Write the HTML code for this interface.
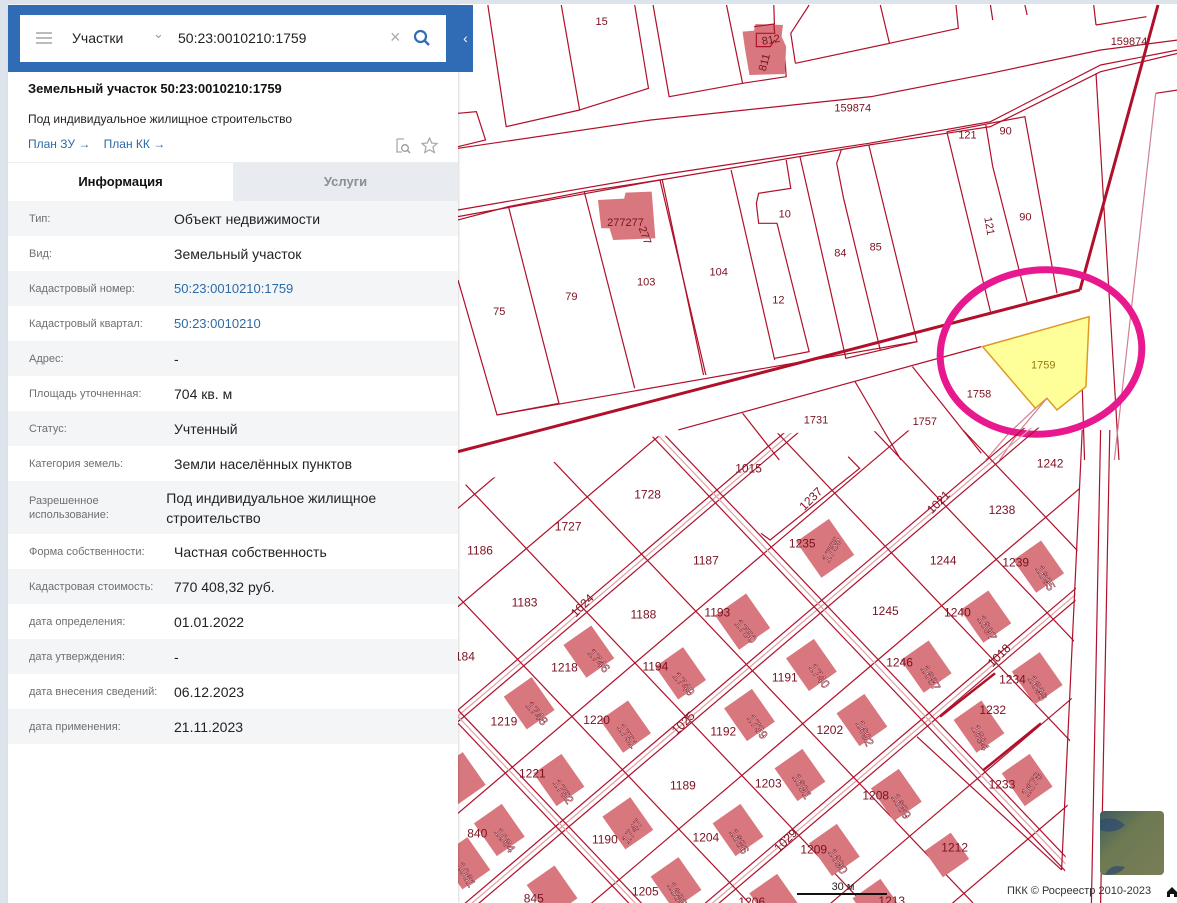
<!DOCTYPE html>
<html><head><meta charset="utf-8"><style>
*{margin:0;padding:0;box-sizing:border-box}
body{width:1177px;height:903px;overflow:hidden;background:#fff;font-family:"Liberation Sans","DejaVu Sans",sans-serif;position:relative}
#map{position:absolute;left:0;top:0}
#map line,#map polyline,#map polygon,#map ellipse{vector-effect:non-scaling-stroke}
.panel{position:absolute;left:8px;top:5px;width:450px;height:898px;background:#fff;box-shadow:1px 0 2px rgba(0,0,0,.15);overflow:hidden}
.hdr{height:67px;background:#2f6cb5;padding:10px 12px}
.sb{background:#fff;height:47px;position:relative;font-size:14px;color:#222}
.tab{position:absolute;left:458px;top:5px;width:15px;height:67px;background:#2f6cb5;color:#fff;font-size:14px;line-height:67px;text-align:center}
.row{height:35px;display:flex;align-items:center;padding-left:21px}
.row.g{background:#f4f5f7}
.l{width:145px;font-size:11px;color:#6f6f6f;line-height:14px}
.v{font-size:14px;color:#222;line-height:20px}
.v.a{color:#2d6aa6;font-size:13px}
</style></head><body>
<svg id="map" width="1177" height="903">
<rect x="0" y="0" width="1177" height="4" fill="#dde3ea"/>
<defs><clipPath id="gc"><polygon points="0,170 430,18 1360,-10 1320,1419 0,1419"/></clipPath></defs>
<g transform="translate(458,0) scale(0.459,0.3333)" fill="none" stroke="#b0102a" stroke-width="1.2">
<polyline points="0,445 420,360 900,290 1160,220 1400,150 1568,120"/>
<polyline points="0,650 440,540 895,435 1160,380 1400,215 1568,160"/>
<polyline points="0,630 440,525 895,430 1160,365 1400,195 1568,150"/>
<polyline points="65,15 105,380 265,330 225,15"/>
<polyline points="265,330 415,265 385,15"/>
<polyline points="425,15 460,290 620,250 585,15"/>
<polyline points="620,250 715,230 710,130 690,100 688,15"/>
<polyline points="735,190 940,130 920,15"/>
<polyline points="735,190 725,100 765,15"/>
<polyline points="940,130 1090,85 1085,15"/>
<polyline points="1165,60 1160,15"/><polyline points="1240,45 1235,15"/>
<polyline points="1390,75 1385,15"/><polyline points="1390,75 1500,50"/>
<polyline points="0,340 40,335 60,420 0,440"/>
<polyline points="0,660 110,620 220,1210 85,1245 0,840"/>
<polyline points="110,620 275,575 385,1165"/>
<polyline points="275,575 440,540 540,1125"/>
<polyline points="445,540 535,1125"/>
<polyline points="85,1245 1000,1025"/>
<polyline points="595,510 690,1080"/>
<polyline points="715,480 725,565 655,580 650,610 655,670 695,670 765,1055 690,1075"/>
<polyline points="745,470 845,1075 1000,1025 895,435"/>
<polyline points="835,450 825,490 840,595 920,1050"/>
<polyline points="1065,395 1160,935"/>
<polyline points="1065,395 1235,350 1305,880"/>
<polyline points="1150,375 1165,500 1240,905"/>
<polyline points="1390,220 1440,1380"/>
<polyline points="1520,280 1568,270"/>
<polyline points="1520,280 1430,1380" stroke="#d08090"/>
<polyline points="480,1290 1060,1070 1140,1040"/>
<polyline points="620,1240 700,1380"/><polyline points="865,1145 965,1380"/>
<polyline points="990,1100 1140,1360"/>
<polyline points="1360,1160 1365,1380"/>
<polygon points="305,600 362,596 365,578 422,575 430,715 338,720 330,685 312,685" fill="#d8787e" stroke="none"/>
<polygon points="620,95 645,92 648,72 708,75 705,110 715,140 712,222 635,225 625,145" fill="#d8787e" stroke="none"/>
<polyline points="645,80 688,72 690,100 650,100 650,140 680,140 690,120"/>
<polygon points="1143,1040 1375,950 1368,1160 1305,1230 1283,1195 1258,1225" fill="#ffff99" stroke="#e09a20" stroke-width="1.5"/>
<polyline points="1258,1225 1200,1300 1150,1380" stroke="#d08090"/><polyline points="1283,1195 1225,1290 1180,1380" stroke="#d08090"/>
<line x1="0" y1="1355" x2="1355" y2="870" stroke-width="3"/>
<line x1="1355" y1="870" x2="1525" y2="15" stroke-width="3"/>
<g stroke="none" fill="#7a1020" font-size="11" text-anchor="middle">
<text transform="translate(313,75) scale(2.18,3)">15</text>
<text transform="translate(683,130) scale(2.18,3) rotate(-10)">812</text>
<text transform="translate(675,190) scale(2.18,3) rotate(-75)">811</text>
<text transform="translate(860,335) scale(2.18,3)">159874</text>
<text transform="translate(1462,135) scale(2.18,3)">159874</text>
<text transform="translate(1110,415) scale(2.18,3)">121</text>
<text transform="translate(1193,403) scale(2.18,3)">90</text>
<text transform="translate(365,678) scale(2.18,3)">277277</text>
<text transform="translate(400,710) scale(2.18,3) rotate(70)">277</text>
<text transform="translate(712,652) scale(2.18,3)">10</text>
<text transform="translate(410,857) scale(2.18,3)">103</text>
<text transform="translate(247,900) scale(2.18,3)">79</text>
<text transform="translate(90,945) scale(2.18,3)">75</text>
<text transform="translate(568,827) scale(2.18,3)">104</text>
<text transform="translate(698,910) scale(2.18,3)">12</text>
<text transform="translate(833,770) scale(2.18,3)">84</text>
<text transform="translate(910,752) scale(2.18,3)">85</text>
<text transform="translate(1150,680) scale(2.18,3) rotate(80)">121</text>
<text transform="translate(1236,662) scale(2.18,3)">90</text>
<text transform="translate(1275,1105) scale(2.18,3)" fill="#9a7a10">1759</text>
<text transform="translate(1135,1192) scale(2.18,3)">1758</text>
<text transform="translate(780,1270) scale(2.18,3)">1731</text>
<text transform="translate(1017,1275) scale(2.18,3)">1757</text>
</g>
</g>
<ellipse cx="1041" cy="352" rx="101" ry="82" fill="none" stroke="#e8198e" stroke-width="7" transform="rotate(-6 1041 352)"/>
<g transform="translate(458,430) scale(0.459,0.3333)">
<g clip-path="url(#gc)" fill="none" stroke="#b0102a" stroke-width="1.2">
<line x1="0" y1="235" x2="1400" y2="-1403"/>
<line x1="0" y1="530" x2="1400" y2="-1108"/>
<line x1="0" y1="840" x2="1400" y2="-798"/>
<line x1="0" y1="875" x2="1400" y2="-763"/>
<line x1="0" y1="858" x2="1400" y2="-780" stroke="#e0a0a8"/>
<line x1="0" y1="1150" x2="1400" y2="-488"/>
<line x1="0" y1="1438" x2="1400" y2="-200"/>
<line x1="0" y1="1473" x2="1400" y2="-165"/>
<line x1="0" y1="1455" x2="1400" y2="-183" stroke="#e0a0a8"/>
<line x1="0" y1="1760" x2="1400" y2="122"/>
<line x1="0" y1="2050" x2="1400" y2="412"/>
<line x1="0" y1="2085" x2="1400" y2="447"/>
<line x1="0" y1="2068" x2="1400" y2="430" stroke="#e0a0a8"/>
<line x1="0" y1="2370" x2="1400" y2="732"/>
<line x1="0" y1="2680" x2="1400" y2="1042"/>
<line x1="0" y1="840" x2="400" y2="1420"/>
<line x1="0" y1="880" x2="380" y2="1431"/>
<line x1="0" y1="860" x2="390" y2="1425" stroke="#e0a0a8"/>
<line x1="0" y1="500" x2="634" y2="1419"/>
<line x1="-100" y1="-5" x2="900" y2="1445"/>
<line x1="143" y1="0" x2="1122" y2="1419"/>
<line x1="410" y1="0" x2="1390" y2="1420"/>
<line x1="440" y1="0" x2="1420" y2="1420"/>
<line x1="425" y1="0" x2="1405" y2="1420" stroke="#e0a0a8"/>
<line x1="690" y1="0" x2="1670" y2="1420"/>
<line x1="905" y1="0" x2="1885" y2="1420"/>
<line x1="1100" y1="0" x2="1360" y2="377"/>
<polyline points="1000,920 1315,1320"/>
<polyline points="850,80 875,115 680,330 660,310"/>
</g>
<g fill="none" stroke="#b0102a" stroke-width="1.2">
<polyline points="1360,0 1315,1320"/>
<polyline points="1400,0 1380,1419"/>
<polyline points="1420,0 1400,1419"/>
<polyline points="1050,860 1170,730" stroke-width="2.5"/>
<polyline points="1145,1020 1270,880" stroke-width="2.5"/>
</g>
<g fill="#d8787e">
<rect x="-20" y="-22" width="40" height="44" transform="translate(800,355) scale(2.18,3) rotate(-35)"/>
<rect x="-17" y="-20" width="34" height="40" transform="translate(1265,410) scale(2.18,3) rotate(-35)"/>
<rect x="-19" y="-21" width="38" height="42" transform="translate(620,575) scale(2.18,3) rotate(-35)"/>
<rect x="-17" y="-20" width="34" height="40" transform="translate(1150,560) scale(2.18,3) rotate(-35)"/>
<rect x="-17" y="-20" width="34" height="40" transform="translate(285,665) scale(2.18,3) rotate(-35)"/>
<rect x="-17" y="-20" width="34" height="40" transform="translate(485,730) scale(2.18,3) rotate(-35)"/>
<rect x="-17" y="-20" width="34" height="40" transform="translate(770,705) scale(2.18,3) rotate(-35)"/>
<rect x="-17" y="-20" width="34" height="40" transform="translate(1020,710) scale(2.18,3) rotate(-35)"/>
<rect x="-17" y="-20" width="34" height="40" transform="translate(155,820) scale(2.18,3) rotate(-35)"/>
<rect x="-17" y="-20" width="34" height="40" transform="translate(365,890) scale(2.18,3) rotate(-35)"/>
<rect x="-17" y="-20" width="34" height="40" transform="translate(635,855) scale(2.18,3) rotate(-35)"/>
<rect x="-17" y="-20" width="34" height="40" transform="translate(880,870) scale(2.18,3) rotate(-35)"/>
<rect x="-17" y="-20" width="34" height="40" transform="translate(1262,745) scale(2.18,3) rotate(-35)"/>
<rect x="-17" y="-20" width="34" height="40" transform="translate(1135,890) scale(2.18,3) rotate(-35)"/>
<rect x="-17" y="-20" width="34" height="40" transform="translate(220,1050) scale(2.18,3) rotate(-35)"/>
<rect x="-17" y="-20" width="34" height="40" transform="translate(745,1035) scale(2.18,3) rotate(-35)"/>
<rect x="-17" y="-20" width="34" height="40" transform="translate(955,1095) scale(2.18,3) rotate(-35)"/>
<rect x="-17" y="-20" width="34" height="40" transform="translate(1240,1050) scale(2.18,3) rotate(-35)"/>
<rect x="-17" y="-20" width="34" height="40" transform="translate(90,1200) scale(2.18,3) rotate(-35)"/>
<rect x="-17" y="-20" width="34" height="40" transform="translate(370,1180) scale(2.18,3) rotate(-35)"/>
<rect x="-17" y="-20" width="34" height="40" transform="translate(610,1200) scale(2.18,3) rotate(-35)"/>
<rect x="-17" y="-20" width="34" height="40" transform="translate(820,1260) scale(2.18,3) rotate(-35)"/>
<rect x="-16" y="-16" width="32" height="32" transform="translate(1065,1275) scale(2.18,3) rotate(-35)"/>
<rect x="-17" y="-20" width="34" height="40" transform="translate(475,1360) scale(2.18,3) rotate(-35)"/>
<rect x="-17" y="-20" width="34" height="40" transform="translate(205,1385) scale(2.18,3) rotate(-35)"/>
<rect x="-17" y="-20" width="34" height="40" transform="translate(5,1045) scale(2.18,3) rotate(-35)"/>
<rect x="-17" y="-20" width="34" height="40" transform="translate(15,1300) scale(2.18,3) rotate(-35)"/>
<rect x="-17" y="-20" width="34" height="40" transform="translate(690,1410) scale(2.18,3) rotate(-35)"/>
<rect x="-17" y="-20" width="34" height="40" transform="translate(915,1425) scale(2.18,3) rotate(-35)"/>
</g>
<g font-size="12" fill="#7a1020" text-anchor="middle">
<text transform="translate(1290,113) scale(2.18,3)">1242</text>
<text transform="translate(633,128) scale(2.18,3)">1015</text>
<text transform="translate(413,205) scale(2.18,3)">1728</text>
<text transform="translate(1185,252) scale(2.18,3)">1238</text>
<text transform="translate(240,302) scale(2.18,3)">1727</text>
<text transform="translate(48,373) scale(2.18,3)">1186</text>
<text transform="translate(540,403) scale(2.18,3)">1187</text>
<text transform="translate(1057,403) scale(2.18,3)">1244</text>
<text transform="translate(750,353) scale(2.18,3)">1235</text>
<text transform="translate(1215,410) scale(2.18,3)">1239</text>
<text transform="translate(145,530) scale(2.18,3)">1183</text>
<text transform="translate(404,565) scale(2.18,3)">1188</text>
<text transform="translate(565,560) scale(2.18,3)">1193</text>
<text transform="translate(931,555) scale(2.18,3)">1245</text>
<text transform="translate(1088,560) scale(2.18,3)">1240</text>
<text transform="translate(15,692) scale(2.18,3)">184</text>
<text transform="translate(232,725) scale(2.18,3)">1218</text>
<text transform="translate(430,722) scale(2.18,3)">1194</text>
<text transform="translate(712,755) scale(2.18,3)">1191</text>
<text transform="translate(962,710) scale(2.18,3)">1246</text>
<text transform="translate(1208,760) scale(2.18,3)">1234</text>
<text transform="translate(1165,852) scale(2.18,3)">1232</text>
<text transform="translate(100,887) scale(2.18,3)">1219</text>
<text transform="translate(302,882) scale(2.18,3)">1220</text>
<text transform="translate(578,917) scale(2.18,3)">1192</text>
<text transform="translate(810,912) scale(2.18,3)">1202</text>
<text transform="translate(162,1043) scale(2.18,3)">1221</text>
<text transform="translate(490,1078) scale(2.18,3)">1189</text>
<text transform="translate(676,1073) scale(2.18,3)">1203</text>
<text transform="translate(1185,1075) scale(2.18,3)">1233</text>
<text transform="translate(910,1108) scale(2.18,3)">1208</text>
<text transform="translate(42,1222) scale(2.18,3)">840</text>
<text transform="translate(320,1240) scale(2.18,3)">1190</text>
<text transform="translate(540,1235) scale(2.18,3)">1204</text>
<text transform="translate(775,1270) scale(2.18,3)">1209</text>
<text transform="translate(1082,1265) scale(2.18,3)">1212</text>
<text transform="translate(408,1397) scale(2.18,3)">1205</text>
<text transform="translate(165,1418) scale(2.18,3)">845</text>
<text transform="translate(640,1428) scale(2.18,3)">1206</text>
<text transform="translate(945,1425) scale(2.18,3)">1213</text>
<text transform="translate(775,215) scale(2.18,3) rotate(-45)">1237</text>
<text transform="translate(1053,225) scale(2.18,3) rotate(-45)">1021</text>
<text transform="translate(277,535) scale(2.18,3) rotate(-45)">1024</text>
<text transform="translate(1185,685) scale(2.18,3) rotate(-45)">1018</text>
<text transform="translate(497,888) scale(2.18,3) rotate(-45)">1025</text>
<text transform="translate(720,1240) scale(2.18,3) rotate(-45)">1029</text>
<g fill="#fff" stroke="#7a1020" stroke-width="0.5">
<text transform="translate(822,365) scale(2.18,3) rotate(-60)">1755</text>
<text transform="translate(1272,450) scale(2.18,3) rotate(60)">1695</text>
<text transform="translate(620,612) scale(2.18,3) rotate(50)">1750</text>
<text transform="translate(1145,600) scale(2.18,3) rotate(60)">1697</text>
<text transform="translate(300,700) scale(2.18,3) rotate(50)">1746</text>
<text transform="translate(485,770) scale(2.18,3) rotate(50)">1749</text>
<text transform="translate(780,745) scale(2.18,3) rotate(55)">1740</text>
<text transform="translate(1022,750) scale(2.18,3) rotate(60)">1687</text>
<text transform="translate(165,858) scale(2.18,3) rotate(50)">1748</text>
<text transform="translate(362,925) scale(2.18,3) rotate(55)">1751</text>
<text transform="translate(645,897) scale(2.18,3) rotate(55)">1739</text>
<text transform="translate(878,915) scale(2.18,3) rotate(65)">1692</text>
<text transform="translate(1255,780) scale(2.18,3) rotate(60)">1698</text>
<text transform="translate(1130,928) scale(2.18,3) rotate(65)">1694</text>
<text transform="translate(222,1092) scale(2.18,3) rotate(55)">1752</text>
<text transform="translate(742,1075) scale(2.18,3) rotate(60)">1691</text>
<text transform="translate(958,1135) scale(2.18,3) rotate(60)">1689</text>
<text transform="translate(1258,1070) scale(2.18,3) rotate(-55)">1678</text>
<text transform="translate(95,1238) scale(2.18,3) rotate(55)">1064</text>
<text transform="translate(387,1210) scale(2.18,3) rotate(-55)">1747</text>
<text transform="translate(605,1240) scale(2.18,3) rotate(60)">1686</text>
<text transform="translate(820,1300) scale(2.18,3) rotate(60)">1690</text>
<text transform="translate(470,1400) scale(2.18,3) rotate(60)">1685</text>
<text transform="translate(10,1340) scale(2.18,3) rotate(60)">1061</text>
</g></g>
</g>
<line x1="797" y1="894" x2="887" y2="894" stroke="#111" stroke-width="2"/>
<text x="843" y="890" font-size="11" text-anchor="middle" fill="#222">30 м</text>
<text x="1007" y="894" font-size="11" fill="#333">ПКК © Росреестр 2010-2023</text>
<path d="M1167,897 v-5 l5,-5 l5,5 v5 h-3 v-3 h-4 v3z" fill="#111"/>
<defs><linearGradient id="sat" x1="0" y1="0" x2="1" y2="1"><stop offset="0" stop-color="#3e5a60"/><stop offset="0.4" stop-color="#6c7a52"/><stop offset="1" stop-color="#7a7c58"/></linearGradient></defs>
<rect x="1100" y="811" width="64" height="64" rx="4" fill="url(#sat)"/>
<path d="M1100,820 q15,-5 25,5 q-10,10 -25,5z" fill="#2c4a70" opacity="0.7"/>
<path d="M1105,875 q5,-12 20,-8 q-5,8 -20,8z" fill="#2c4a70" opacity="0.7"/>
</svg>
<div style="position:absolute;left:0;top:0;width:8px;height:903px;background:#dde3ea"></div>
<div class="panel">
 <div class="hdr"><div class="sb">
  <div style="position:absolute;left:16px;top:17px;width:16px;height:2px;background:#bbb;box-shadow:0 5px 0 #bbb,0 10px 0 #bbb"></div>
  <div style="position:absolute;left:52px;top:15px">Участки</div>
  <div style="position:absolute;left:133px;top:11px;color:#999;font-size:13px">&#8964;</div>
  <div style="position:absolute;left:158px;top:15px">50:23:0010210:1759</div>
  <div style="position:absolute;left:370px;top:12px;color:#aaa;font-size:18px">×</div>
  <svg style="position:absolute;left:393px;top:14px" width="18" height="18"><circle cx="7.5" cy="7.5" r="5.5" fill="none" stroke="#2f6cb5" stroke-width="2.2"/><line x1="11.5" y1="11.5" x2="16" y2="16" stroke="#2f6cb5" stroke-width="2.4"/></svg>
 </div></div>
 <div style="padding:9px 0 0 20px;font-size:13px;font-weight:bold;color:#111">Земельный участок 50:23:0010210:1759</div>
 <div style="padding:16px 0 0 20px;font-size:12px;color:#222">Под индивидуальное жилищное строительство</div>
 <div style="padding:11px 0 0 20px;font-size:12px;color:#2d6aa6;position:relative;height:36px">План ЗУ →&nbsp;&nbsp;&nbsp;&nbsp;План КК →
  <svg style="position:absolute;left:387px;top:12px" width="16" height="16"><path d="M2,1 h7 M2,1 v13 h5" fill="none" stroke="#aaa" stroke-width="1.3"/><circle cx="10" cy="10" r="3.3" fill="none" stroke="#999" stroke-width="1.3"/><line x1="12.5" y1="12.5" x2="15" y2="15" stroke="#999" stroke-width="1.5"/></svg>
  <svg style="position:absolute;left:413px;top:11px" width="17" height="17"><path d="M8.5,1 L10.7,6 L16,6.5 L12,10 L13.2,15.5 L8.5,12.7 L3.8,15.5 L5,10 L1,6.5 L6.3,6 Z" fill="none" stroke="#aaa" stroke-width="1.3"/></svg>
 </div>
 <div style="display:flex;height:39px;border-top:1px solid #eceef1;font-size:13px;font-weight:bold">
  <div style="width:225px;text-align:center;line-height:38px;color:#111">Информация</div>
  <div style="width:225px;text-align:center;line-height:38px;color:#8a8f96;background:#e8ecf0">Услуги</div>
 </div>
 <div class="row g"><div class="l">Тип:</div><div class="v">Объект недвижимости</div></div>
 <div class="row"><div class="l">Вид:</div><div class="v">Земельный участок</div></div>
 <div class="row g"><div class="l">Кадастровый номер:</div><div class="v a">50:23:0010210:1759</div></div>
 <div class="row"><div class="l">Кадастровый квартал:</div><div class="v a">50:23:0010210</div></div>
 <div class="row g"><div class="l">Адрес:</div><div class="v">-</div></div>
 <div class="row"><div class="l">Площадь уточненная:</div><div class="v">704 кв. м</div></div>
 <div class="row g"><div class="l">Статус:</div><div class="v">Учтенный</div></div>
 <div class="row"><div class="l">Категория земель:</div><div class="v">Земли населённых пунктов</div></div>
 <div class="row g" style="height:53px"><div class="l">Разрешенное использование:</div><div class="v">Под индивидуальное жилищное строительство</div></div>
 <div class="row"><div class="l">Форма собственности:</div><div class="v">Частная собственность</div></div>
 <div class="row g"><div class="l">Кадастровая стоимость:</div><div class="v">770 408,32 руб.</div></div>
 <div class="row"><div class="l">дата определения:</div><div class="v">01.01.2022</div></div>
 <div class="row g"><div class="l">дата утверждения:</div><div class="v">-</div></div>
 <div class="row"><div class="l">дата внесения сведений:</div><div class="v">06.12.2023</div></div>
 <div class="row g"><div class="l">дата применения:</div><div class="v">21.11.2023</div></div>
</div>
<div class="tab">&#8249;</div>
</body></html>
